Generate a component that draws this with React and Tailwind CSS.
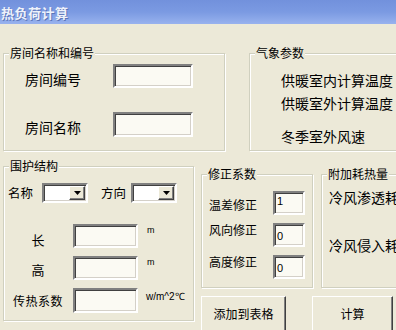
import React from "react";

const cjk = "font-['Noto_Sans_CJK_SC','Noto_Sans',sans-serif]";

function Group({ label, className = "", children }) {
  return (
    <div
      className={`relative shrink-0 border border-[#d0d0bf] shadow-[inset_1px_1px_0_#fff,1px_1px_0_#fff] ${className}`}
    >
      <span className="absolute -top-[8px] left-[5px] bg-[#ece9d8] px-[1px] text-[12px] leading-[14px] text-black whitespace-nowrap">
        {label}
      </span>
      {children}
    </div>
  );
}

function Input({ className = "", value = "" }) {
  return (
    <div
      className={`shrink-0 border-2 border-t-[#808080] border-l-[#808080] border-b-[#fff] border-r-[#fff] bg-[#fbfaf3] shadow-[inset_1px_1px_0_#404040,inset_-1px_-1px_0_#d4d0c8] font-['Liberation_Sans',sans-serif] text-[11px] leading-none pl-[2px] pt-[3px] ${className}`}
    >
      {value}
    </div>
  );
}

function Combo() {
  return (
    <div className="flex h-[20px] w-[46px] shrink-0 border-2 border-t-[#808080] border-l-[#808080] border-b-[#fff] border-r-[#fff] bg-white shadow-[inset_1px_1px_0_#404040,inset_-1px_-1px_0_#d4d0c8] p-[1px]">
      <div className="flex-1" />
      <div className="flex w-[16px] items-center justify-center bg-[#ece9d8] border border-t-[#fff] border-l-[#fff] border-b-[#404040] border-r-[#404040] shadow-[inset_-1px_-1px_0_#808080]">
        <svg width="7" height="4" viewBox="0 0 7 4">
          <path d="M0 0H7L3.5 4Z" fill="#000" />
        </svg>
      </div>
    </div>
  );
}

function Button({ label, className = "" }) {
  return (
    <div
      className={`h-[40px] shrink-0 border border-t-[#fff] border-l-[#fff] border-b-[#404040] border-r-[#404040] shadow-[inset_-1px_-1px_0_#808080] bg-[#ece9d8] text-center text-[12px] leading-[14px] pt-[10px] ${className}`}
    >
      {label}
    </div>
  );
}

export default function App() {
  return (
    <div className={`relative h-[330px] w-[396px] overflow-hidden bg-[#ece9d8] text-black ${cjk}`}>
      {/* title bar */}
      <div className="flex h-[24px] items-center bg-gradient-to-b from-[#7291dc] via-[#7b9ae2] to-[#98b2ee] pl-[1px]">
        <span className="text-[13px] font-bold leading-none tracking-[0.5px] text-[#eef2fb] [text-shadow:1px_1px_0_#5a75b8]">
          热负荷计算
        </span>
      </div>

      {/* top row */}
      <div className="mt-[29px] flex w-[500px] pl-[3px]">
        <Group label="房间名称和编号" className="h-[98px] w-[222px]">
          <div className="flex flex-col gap-[24px] pl-[21px] pt-[10px]">
            <div className="flex items-center">
              <span className="w-[88px] shrink-0 pt-[6px] text-[14px] leading-[16px]">房间编号</span>
              <Input className="h-[24px] w-[80px]" />
            </div>
            <div className="flex items-center">
              <span className="w-[88px] shrink-0 pt-[5px] text-[14px] leading-[16px]">房间名称</span>
              <Input className="h-[25px] w-[80px]" />
            </div>
          </div>
        </Group>
        <Group label="气象参数" className="ml-[24px] h-[98px] w-[170px]">
          <div className="flex flex-col pl-[31px] pt-[16px] text-[14px] leading-[20px] whitespace-nowrap">
            <span>供暖室内计算温度</span>
            <span className="mt-[3px]">供暖室外计算温度</span>
            <span className="mt-[13px]">冬季室外风速</span>
          </div>
        </Group>
      </div>

      {/* bottom row */}
      <div className="mt-[15px] flex w-[500px] pl-[3px]">
        <Group label="围护结构" className="h-[155px] w-[191px]">
          <div className="flex flex-col pl-[4px] pt-[16px]">
            <div className="flex items-start">
              <span className="w-[34px] shrink-0 pt-[2px] text-[12.5px] leading-[16px]">名称</span>
              <Combo />
              <span className="ml-[13px] w-[30px] shrink-0 pt-[2px] text-[12.5px] leading-[16px]">方向</span>
              <Combo />
            </div>
            <div className="mt-[21px] flex flex-col gap-[8px]">
              <div className="flex items-center">
                <span className="w-[64px] shrink-0 pr-[4px] pt-[7px] text-center text-[13px] leading-[16px]">长</span>
                <Input className="ml-[1px] h-[24px] w-[65px]" />
                <span className="ml-[9px] self-start pt-[2px] font-['Liberation_Sans',sans-serif] text-[9px] leading-none">m</span>
              </div>
              <div className="flex items-center">
                <span className="w-[64px] shrink-0 pr-[4px] pt-[3px] text-center text-[13px] leading-[16px]">高</span>
                <Input className="ml-[1px] h-[24px] w-[65px]" />
                <span className="ml-[9px] self-start pt-[2px] font-['Liberation_Sans',sans-serif] text-[9px] leading-none">m</span>
              </div>
              <div className="flex items-center">
                <span className="w-[64px] shrink-0 pr-[4px] pt-[1px] text-center text-[12px] leading-[16px] tracking-[0.5px] whitespace-nowrap">传热系数</span>
                <Input className="ml-[1px] h-[25px] w-[65px]" />
                <span className="ml-[8px] self-start whitespace-nowrap pt-[4px] font-['Liberation_Sans',sans-serif] text-[10px] leading-none">
                  w/m^2℃
                </span>
              </div>
            </div>
          </div>
        </Group>

        <div className="ml-[7px] mt-[8px] flex shrink-0 flex-col">
          <div className="flex">
            <Group label="修正系数" className="h-[114px] w-[112px]">
              <div className="flex flex-col gap-[8px] pl-[7px] pt-[16px]">
                <div className="flex items-start">
                  <span className="mt-[8px] w-[64px] shrink-0 text-[12px] leading-[12px]">温差修正</span>
                  <Input className="h-[24px] w-[32px]" value="1" />
                </div>
                <div className="flex items-start">
                  <span className="mt-[1px] w-[64px] shrink-0 text-[12px] leading-[12px]">风向修正</span>
                  <Input className="h-[24px] w-[32px] pt-[6px]" value="0" />
                </div>
                <div className="flex items-start">
                  <span className="mt-[1px] w-[64px] shrink-0 text-[12px] leading-[12px]">高度修正</span>
                  <Input className="h-[24px] w-[32px] pt-[6px]" value="0" />
                </div>
              </div>
            </Group>
            <Group label="附加耗热量" className="ml-[8px] h-[114px] w-[120px]">
              <div className="flex flex-col pl-[7px] pt-[14px] text-[14px] leading-[16px] whitespace-nowrap">
                <span>冷风渗透耗热量</span>
                <span className="mt-[32px]">冷风侵入耗热量</span>
              </div>
            </Group>
          </div>
          <div className="mt-[8px] flex">
            <Button label="添加到表格" className="w-[85px]" />
            <Button label="计算" className="ml-[26px] w-[81px]" />
          </div>
        </div>
      </div>
    </div>
  );
}
